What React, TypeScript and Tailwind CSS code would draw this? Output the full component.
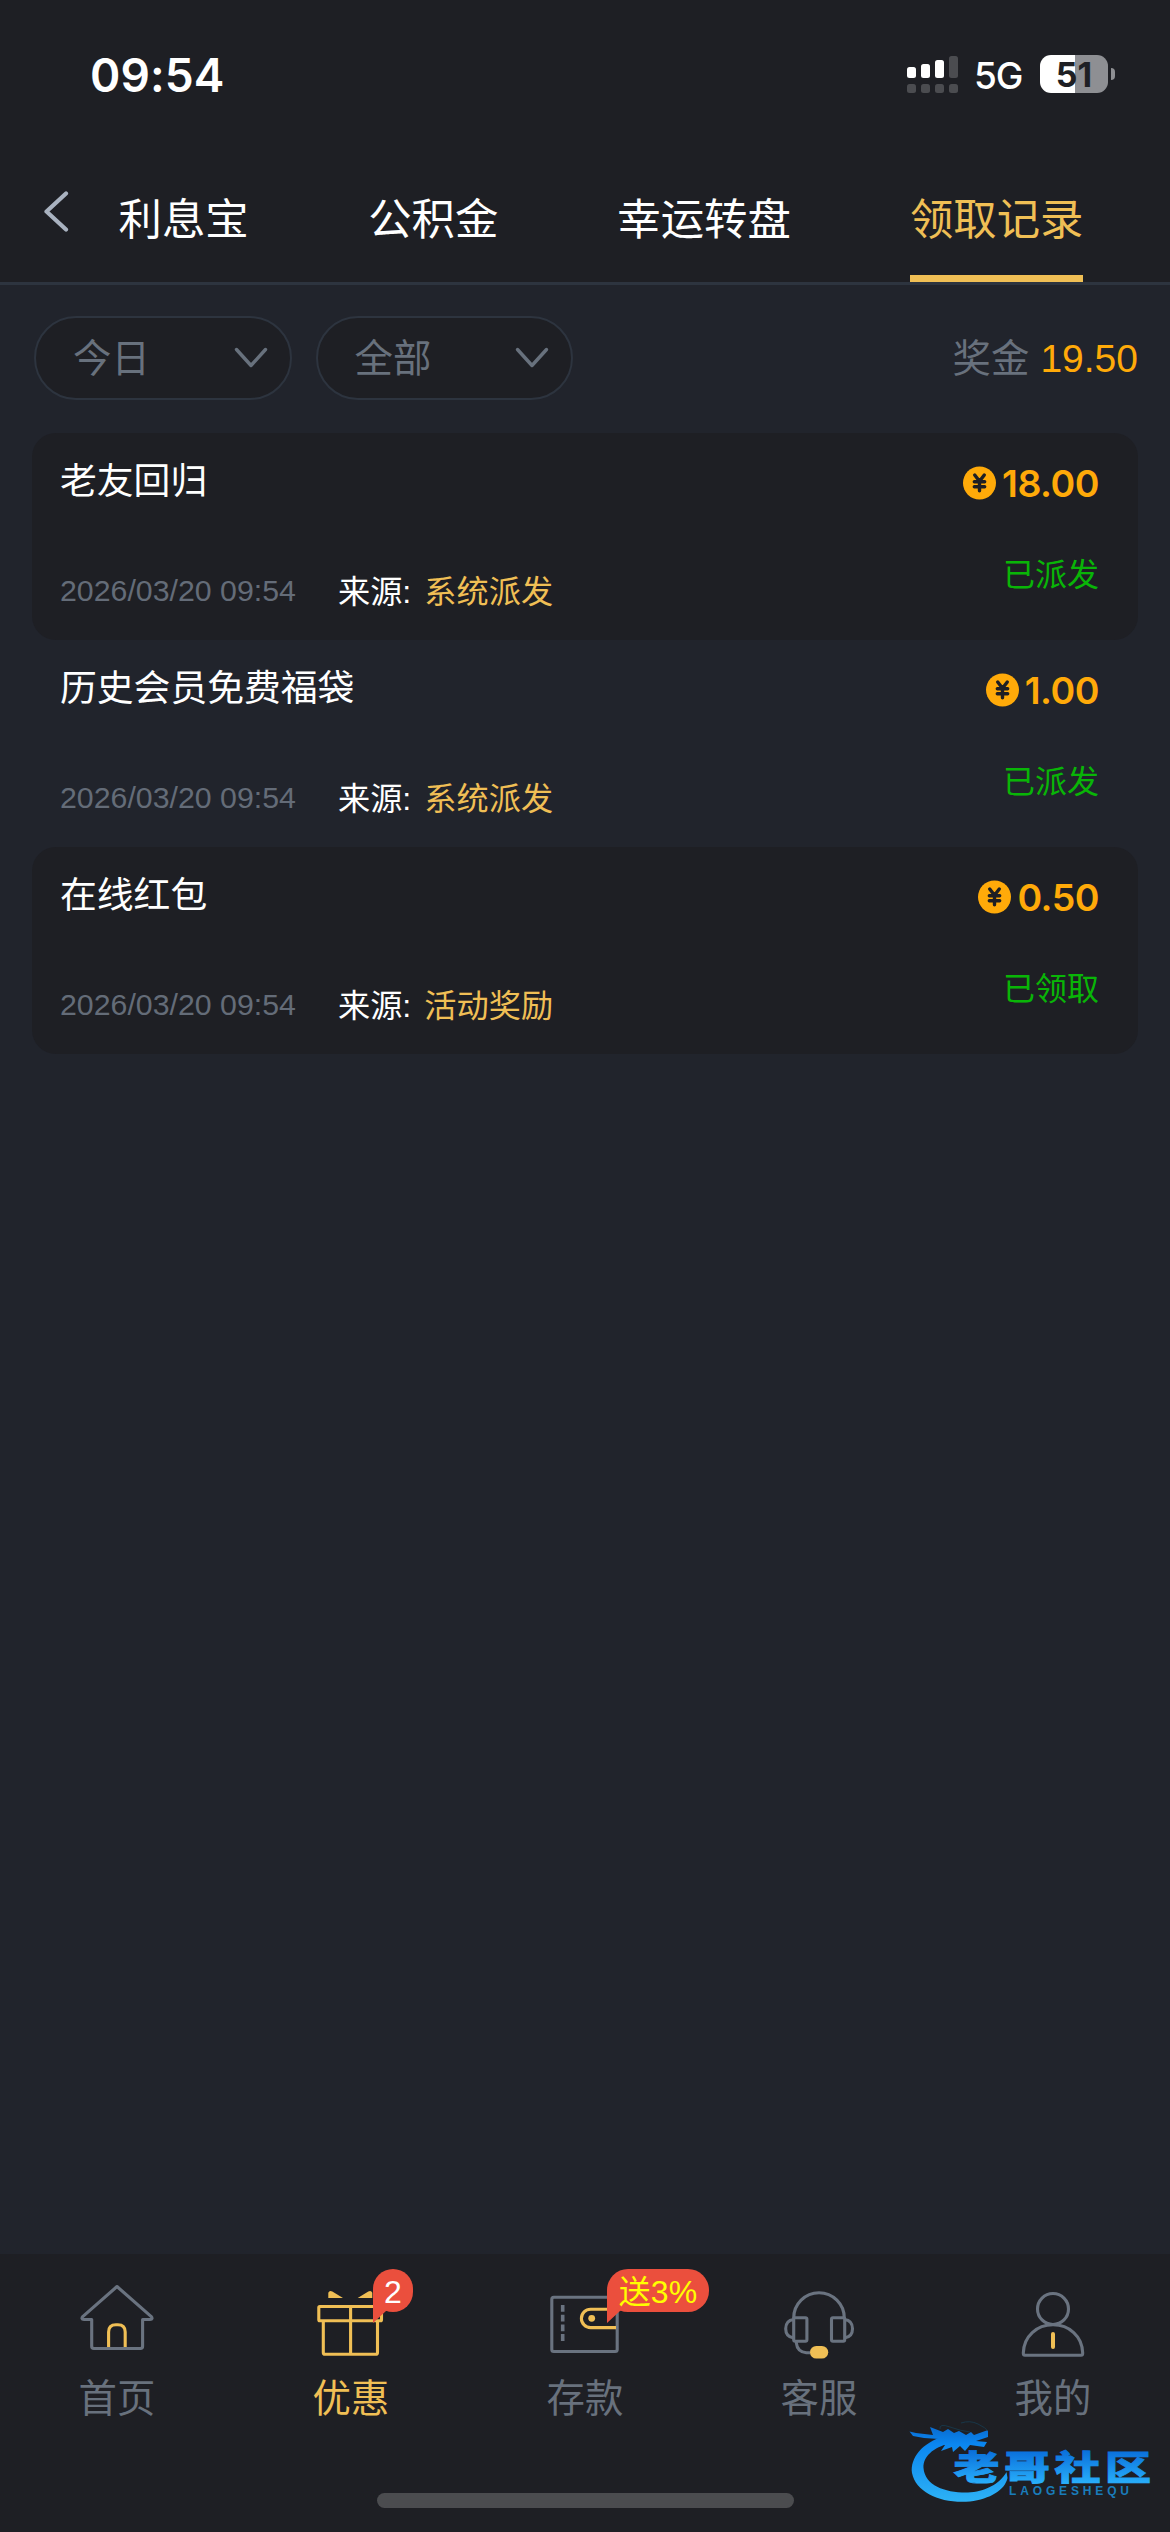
import type { ReactNode } from 'react';

const sans = "font-['Liberation_Sans','Noto_Sans_CJK_SC',sans-serif]";

const tabs = [
    { label: '利息宝', className: 'ml-[49.5px]' },
    { label: '公积金', className: 'ml-[119.5px]' },
    { label: '幸运转盘', className: 'ml-[119px]' },
    { label: '领取记录', className: 'ml-[119px]', active: true },
];

const records = [
    { title: '老友回归', amount: '18.00', source: '系统派发', status: '已派发' },
    { title: '历史会员免费福袋', amount: '1.00', source: '系统派发', status: '已派发' },
    { title: '在线红包', amount: '0.50', source: '活动奖励', status: '已领取' },
];

const StatusBar = () => (
    <div className="flex h-[148px] items-center justify-between pl-[90px] pr-[55px] font-['Inter',sans-serif] text-white">
        <div className="pt-px text-[46px] font-semibold leading-none tracking-[0.1px]">09:54</div>
        <div className="flex items-center">
            <svg width="51" height="37" viewBox="0 0 51 37" fill="#fff">
                <rect x="0" y="11" width="9" height="11" rx="2.5" />
                <rect x="14" y="8" width="9" height="14" rx="2.5" />
                <rect x="28" y="4" width="9" height="18" rx="2.5" />
                <rect x="42" y="0" width="9" height="22" rx="2.5" fill="#4b4c50" />
                {[0, 14, 28, 42].map((x) => (
                    <rect key={x} x={x} y="28" width="9" height="9" rx="2.5" fill="#4b4c50" />
                ))}
            </svg>
            <span className="ml-[16px] w-[50px] pt-[3px] text-[37px] font-medium leading-none tracking-[-1px]">5G</span>
            <div className="ml-[16px] flex h-[38px] w-[68px] items-center justify-center rounded-[11px] bg-linear-to-r from-white from-[51%] to-[#8e8f93] to-[51%] pt-px text-[34px] font-bold leading-none text-[#1e1f24]">
                51
            </div>
            <div className="ml-[3px] h-3 w-1 rounded-r-full bg-[#8e8f93]" />
        </div>
    </div>
);

const Header = () => (
    <header className="h-[285px] border-b-[3px] border-[#2d343f] bg-[#1e1f24]">
        <StatusBar />
        <nav className="flex h-[134px] items-stretch pl-[43px]">
            <svg className="mt-[43px]" width="26" height="41" viewBox="0 0 26 41" fill="none" stroke="#a9b2c0" strokeWidth="4.2" strokeLinecap="round" strokeLinejoin="round">
                <path d="M23 2.5 3.5 20.5 23 38.5" />
            </svg>
            {tabs.map((tab) => (
                <div key={tab.label} className={`${tab.className} flex flex-col justify-between whitespace-nowrap pt-[39px] text-[43.4px] leading-[66px] ${tab.active ? 'text-[#f0bf55]' : 'text-white'}`}>
                    {tab.label}
                    {tab.active && <span className="h-[7px] bg-[#f0bf55]" />}
                </div>
            ))}
        </nav>
    </header>
);

const Select = ({ label }: { label: string }) => (
    <button className="flex h-[84px] w-[257.5px] items-center justify-between rounded-full border-2 border-[#2d343f] bg-[#1e1f24] pl-[37px] pr-[22px]">
        <span className="pt-px">{label}</span>
        <svg width="34" height="22" viewBox="0 0 34 22" fill="none" stroke="#68717d" strokeWidth="3.4" strokeLinecap="round" strokeLinejoin="round">
            <path d="M2.5 2.5 17 18.5 31.5 2.5" />
        </svg>
    </button>
);

const Coin = () => (
    <svg className="mb-[2px] mr-[6px]" width="33" height="34" viewBox="0 0 33 34">
        <circle cx="16.5" cy="17" r="16.5" fill="#ffaa09" />
        <path d="M11.7 9 16.5 15.3 21.3 9M11.3 15.8H21.7M11.3 20.8H21.7M16.5 15.3V24.8" fill="none" stroke="#1e1f24" strokeWidth="3.4" strokeLinecap="round" />
    </svg>
);

const Record = ({ title, amount, source, status }: (typeof records)[number]) => (
    <li className="flex h-[207px] justify-between rounded-[24px] pl-[28px] pr-[39px] odd:bg-[#1e1f24]">
        <div className="flex flex-col justify-between pb-[23px] pt-[24px]">
            <h3 className="text-[36.8px] leading-[50px] text-white">{title}</h3>
            <div className="flex items-center whitespace-nowrap text-[32.2px] leading-[48px]">
                <time className="w-[278px] pb-[2px] text-[30.3px] text-[#646c78]">2026/03/20 09:54</time>
                <span className="mr-[13px] text-white">来源:</span>
                <span className="text-[#f0bf55]">{source}</span>
            </div>
        </div>
        <div className="flex flex-col items-end pt-[27px]">
            <div className="flex h-[48px] items-center font-['Inter',sans-serif] text-[37.5px] font-semibold tracking-[-0.5px] text-[#ffaa09]">
                <Coin />
                {amount}
            </div>
            <div className="mt-[43px] text-[32px] leading-[48px] text-[#09b507]">{status}</div>
        </div>
    </li>
);

const NavIcon = ({ children }: { children: ReactNode }) => (
    <svg width="96" height="92" viewBox="0 0 96 92" fill="none" stroke="#6a7380" strokeWidth="3.1" strokeLinejoin="round">
        {children}
    </svg>
);

const Badge = ({ className, children }: { className: string; children: ReactNode }) => (
    <div className={`absolute -top-px flex h-[43px] items-center justify-center rounded-[21px] bg-[#eb4f3d] text-[32px] leading-none ${className}`}>
        <svg className="absolute left-0 top-[21px]" width="16" height="33" viewBox="0 0 16 33" fill="#eb4f3d">
            <path d="M0 0H16V19L13 21 0 33Z" />
        </svg>
        <span className="relative pt-[2px]">{children}</span>
    </div>
);

const navItems = [
    {
        label: '首页',
        icon: (
            <>
                <path d="M48 16.5 14 46.3Q11.5 49.3 15 49.5H22.7V76.3Q22.7 78.5 24.9 78.5H71.4Q73.6 78.5 73.6 76.3V49.5H81Q84.5 49.3 82 46.3Z" />
                <path d="M39.6 77V62q0-7.3 7.3-7.3h2q7.3 0 7.3 7.3V77" stroke="#f0bf55" />
            </>
        ),
    },
    {
        label: '优惠',
        active: true,
        icon: (
            <g stroke="#f0bf55">
                <rect x="15.8" y="36.5" width="62.7" height="14.2" rx="1" />
                <path d="M20.3 51V82.5Q20.3 84.3 22.1 84.3H72.7Q74.5 84.3 74.5 82.5V51M47.6 36.5V84" />
                <path d="M25.3 28V22.7q1-2.4 4-1.2L40 28ZM69.3 28V22.7q-1-2.4-4-1.2L54.7 28Z" fill="#f0bf55" stroke="none" />
            </g>
        ),
        badge: <Badge className="left-[139px] w-[40px] text-white">2</Badge>,
    },
    {
        label: '存款',
        icon: (
            <>
                <rect x="14.8" y="27.2" width="65.4" height="54.3" rx="2" />
                <path d="M25.7 35V72" strokeWidth="3.6" strokeDasharray="6.8 2.9" />
                <path d="M79 39.2H53.6a9.2 9.2 0 0 0 0 18.4H79" stroke="#f0bf55" />
                <circle cx="54.7" cy="48.3" r="3.4" fill="#f0bf55" stroke="none" />
            </>
        ),
        badge: <Badge className="left-[139px] w-[102px] text-[#ffff00]">送3%</Badge>,
    },
    {
        label: '客服',
        icon: (
            <>
                <path d="M22.7 48a25.3 25.3 0 0 1 50.6 0" />
                <rect x="22.7" y="47.7" width="13.2" height="23.6" rx="1.5" />
                <rect x="60.5" y="47.7" width="13.2" height="23.6" rx="1.5" />
                <path d="M22.7 49.5q-8 1-8 9.2t8 9.2M73.5 49.5q8 1 8 9.2t-8 9.2M25.3 71.3v1.5q1 9 10 9.9h4" />
                <rect x="39" y="76" width="18.2" height="12.6" rx="6.3" fill="#f0bf55" stroke="none" />
            </>
        ),
    },
    {
        label: '我的',
        icon: (
            <>
                <circle cx="48" cy="39" r="15.5" />
                <path d="M20 85.3H76Q77.7 85.3 77.7 83C77.3 66 64 54.8 48 54.8S18.7 66 18.3 83Q18.3 85.3 20 85.3Z" />
                <path d="M48 64V77" stroke="#f0bf55" strokeWidth="4" strokeLinecap="round" />
            </>
        ),
    },
];

// Community watermark floating over the lower right corner
const Watermark = () => (
    <div className="absolute left-[908px] top-[2418px] h-[86px] w-[244px]">
        <svg width="244" height="86" viewBox="0 0 244 86">
            <defs>
                <linearGradient id="wm" x1="0" y1="0" x2="0" y2="86" gradientUnits="userSpaceOnUse">
                    <stop offset="0.1" stopColor="#0a6ace" />
                    <stop offset="0.3" stopColor="#0a86f0" />
                    <stop offset="1" stopColor="#2fb4f6" />
                </linearGradient>
                <linearGradient id="wmText" x1="0" y1="33" x2="0" y2="66" gradientUnits="userSpaceOnUse">
                    <stop offset="0" stopColor="#0a70dc" />
                    <stop offset="1" stopColor="#29b0fb" />
                </linearGradient>
            </defs>
            {/* tail ring */}
            <path d="M36 18C14 25 2 40 4 55 8 75 34 86 62 83.5 82 81 97 72 99.5 60L98.5 54C92 66 76 74 60 74.5 38 75 17 68 15.5 50 15 38 25 30 42 25Z" fill="url(#wm)" />
            {/* dragon head */}
            <path d="M1.5 13.5 8 15 25 17 22 9 35 14 40 11 46 15 51 13 58 17 63 14 66 17 80 12 80 19 68 23 79 24 76 29 62 27 57 33 52 28 45 34 44 29 33 33 37 27 27 25 31 21 16 20 5 18Z" fill="url(#wm)" />
            <path d="M32 11Q31 5 42 9T62 14M53 5Q62 2 70 6T80 13" fill="none" stroke="#163c50" strokeWidth="0.8" />
            <g fill="url(#wmText)" stroke="url(#wmText)" strokeWidth="0.8" fontFamily="'Noto Sans CJK SC', sans-serif" fontWeight="900">
                <text x="45.5" y="62" fontSize="34" textLength="46" lengthAdjust="spacingAndGlyphs">老</text>
                <text x="96" y="62" fontSize="34" textLength="46" lengthAdjust="spacingAndGlyphs">哥</text>
                <text x="146.5" y="62" fontSize="34" textLength="46" lengthAdjust="spacingAndGlyphs">社</text>
                <text x="197" y="62" fontSize="34" textLength="46" lengthAdjust="spacingAndGlyphs">区</text>
            </g>
            <text x="101" y="76.5" fontSize="12" fontWeight="600" fontFamily="'Liberation Sans', sans-serif" fill="#1a7cba" textLength="120">LAOGESHEQU</text>
        </svg>
    </div>
);

const App = () => (
    <div className={`relative flex h-[2532px] w-[1170px] flex-col overflow-hidden bg-[#21242c] ${sans}`}>
        <Header />
        <main className="flex-1 px-[32px] pt-[31px]">
            <div className="flex h-[84px] items-center gap-[24px] pl-[2px] text-[38.4px] text-[#68717d]">
                <Select label="今日" />
                <Select label="全部" />
                <div className="ml-auto flex items-center gap-[11px] pt-[2px]">
                    奖金
                    <span className="text-[39px] text-[#ffaa09]">19.50</span>
                </div>
            </div>
            <ul className="mt-[33px]">
                {records.map((record) => (
                    <Record key={record.title} {...record} />
                ))}
            </ul>
        </main>
        <footer className="h-[278px] bg-[#1e1f24]">
            <div className="grid h-[239px] grid-cols-5 pt-[16px]">
                {navItems.map((item) => (
                    <div key={item.label} className={`relative flex flex-col items-center text-[38.4px] leading-[56px] ${item.active ? 'text-[#f0bf55]' : 'text-[#68717d]'}`}>
                        <NavIcon>{item.icon}</NavIcon>
                        <span className="mt-[9px]">{item.label}</span>
                        {item.badge}
                    </div>
                ))}
            </div>
            <div className="mx-auto h-[15px] w-[417px] rounded-full bg-[#4b4c4f]" />
        </footer>
        <Watermark />
    </div>
);

export default App;
